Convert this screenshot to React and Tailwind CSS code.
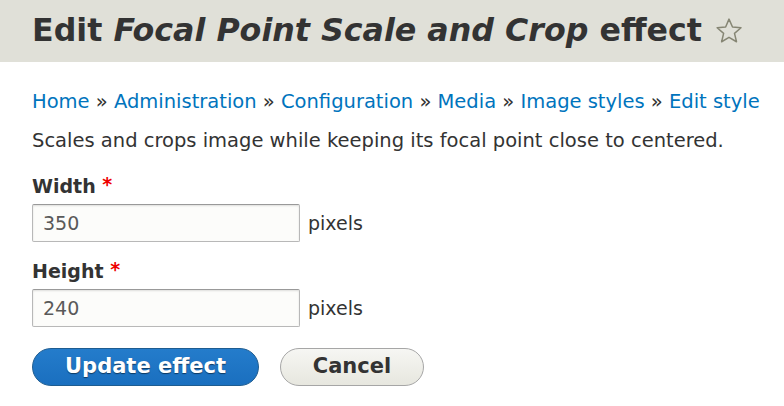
import React from "react";

const crumbs = ["Home", "Administration", "Configuration", "Media", "Image styles", "Edit style"];

function Field({ label, value }) {
  return (
    <div className="mb-[16px]">
      <label className="block font-bold text-[19px] leading-[22px] text-[#333] mb-[7px]">
        {label} <span className="text-[#e00] align-[2px]">*</span>
      </label>
      <div className="flex items-center gap-[8px]">
        <input
          defaultValue={value}
          className="w-[268px] h-[38px] px-[10px] text-[19px] text-[#595959] bg-[#fcfcfa] border border-[#b8b8b8] border-t-[#999] rounded-[2px] shadow-[inset_0_1px_2px_rgba(0,0,0,0.12)] outline-none"
        />
        <span className="text-[19px] text-[#333]">pixels</span>
      </div>
    </div>
  );
}

export default function App() {
  return (
    <div className="w-[784px] h-[406px] bg-white overflow-hidden font-['DejaVu_Sans',sans-serif]">
      <div className="h-[62px] bg-[#e0e0d8] flex items-center px-[32px]">
        <h1 className="font-bold text-[31.7px] leading-none text-[#333] flex items-center">
          Edit&nbsp;<em>Focal Point Scale and Crop</em>&nbsp;effect
          <svg className="ml-[12px]" width="30" height="30" viewBox="0 0 24 24" fill="none" stroke="#868674" strokeWidth="1.2" strokeLinejoin="round">
            <path d="M12 2.5l2.8 6.3 6.8.6-5.2 4.5 1.6 6.7L12 17.1l-5.9 3.5 1.6-6.7-5.2-4.5 6.8-.6z" />
          </svg>
        </h1>
      </div>
      <div className="px-[32px] pt-[26px]">
        <nav className="text-[19.5px] leading-[28px] text-[#333] whitespace-nowrap">
          {crumbs.map((c, i) => (
            <React.Fragment key={c}>
              {i > 0 && " » "}
              <a className="text-[#0074bd]" href="#">{c}</a>
            </React.Fragment>
          ))}
        </nav>
        <p className="text-[19.5px] leading-[28px] text-[#333] mt-[11px] mb-[18px]">
          Scales and crops image while keeping its focal point close to centered.
        </p>
        <Field label="Width" value="350" />
        <Field label="Height" value="240" />
        <div className="flex gap-[21px] pt-[5px]">
          <button className="h-[38px] w-[227px] rounded-full border border-[#1e5c90] bg-gradient-to-b from-[#247ccb] to-[#1a6fbf] text-white font-bold text-[21px] [text-shadow:0_1px_1px_rgba(0,0,0,0.5)]">
            Update effect
          </button>
          <button className="h-[38px] w-[144px] rounded-full border border-[#a6a6a6] bg-gradient-to-b from-[#f6f6f3] to-[#e7e7df] text-[#333] font-bold text-[21px]">
            Cancel
          </button>
        </div>
      </div>
    </div>
  );
}
